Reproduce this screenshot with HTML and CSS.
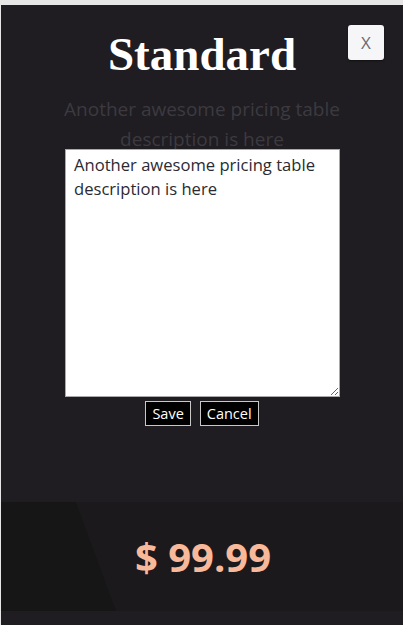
FILE: index.html
```html
<!DOCTYPE html>
<html>
<head>
<meta charset="utf-8">
<link rel="stylesheet" href="styles.css">
</head>
<body>
<div class="card">
  <div class="head">
    <h1 class="title">Standard</h1>
    <button class="close">X</button>
  </div>
  <p class="desc">Another awesome pricing table description is here</p>
  <div class="editor">
    <textarea class="area">Another awesome pricing table description is here</textarea>
    <div class="actions">
      <button class="btn">Save</button>
      <button class="btn">Cancel</button>
    </div>
  </div>
  <div class="price-band">
    <div class="slant"></div>
    <div class="price">$ 99.99</div>
  </div>
  <div class="foot"></div>
</div>
</body>
</html>
```
FILE: styles.css
```css
html, body {
  margin: 0;
  padding: 0;
  background: #e6e6e6;
  height: 100%;
  overflow: hidden;
}
.card {
  margin: 5px 0 0 1px;
  background: #1f1d21;
  height: 620px;
  display: flex;
  flex-direction: column;
  font-family: "Open Sans", "Noto Sans", sans-serif;
}
.head {
  position: relative;
  height: 85px;
  display: flex;
  justify-content: center;
}
.title {
  margin: 21px 0 0 0;
  font-family: "Liberation Serif", serif;
  font-weight: bold;
  font-size: 47px;
  line-height: 56px;
  color: #ffffff;
}
.close {
  position: absolute;
  top: 20px;
  right: 19px;
  width: 36px;
  height: 35px;
  border: none;
  border-radius: 3px;
  background: #f6f6f8;
  color: #6a6a72;
  font-family: "Open Sans", sans-serif;
  font-size: 17px;
  padding: 0;
  box-shadow: 0 1px 2px rgba(0,0,0,0.5);
}
.desc {
  margin: 4px 60px 0 60px;
  text-align: center;
  color: #3c3a40;
  font-size: 19px;
  line-height: 30px;
  height: 55px;
  overflow: visible;
}
.editor {
  display: flex;
  flex-direction: column;
  align-items: center;
  position: relative;
  z-index: 1;
}
.area {
  display: block;
  width: 275px;
  height: 248px;
  box-sizing: border-box;
  margin: 0 0 0 1px;
  padding: 3px 8px;
  border: 1px solid #a9a9a9;
  background: #ffffff;
  color: #2b2a33;
  font-family: "Open Sans", "Noto Sans", sans-serif;
  font-size: 16.6px;
  line-height: 24px;
  resize: both;
}
.actions {
  display: flex;
  gap: 9px;
  margin-top: 4px;
}
.btn {
  background: #000000;
  color: #ffffff;
  border: 1px solid #c8c8c8;
  font-family: "Open Sans", sans-serif;
  font-size: 14.5px;
  padding: 1px 6px;
  height: 25px;
  line-height: 20px;
}
.price-band {
  margin-top: 76px;
  height: 109px;
  background: #1b191c;
  position: relative;
  display: flex;
  align-items: center;
  justify-content: center;
  overflow: hidden;
}
.slant {
  position: absolute;
  left: 0;
  top: 0;
  width: 115px;
  height: 100%;
  background: #161617;
  clip-path: polygon(0 0, 65% 0, 100% 100%, 0 100%);
}
.price {
  position: relative;
  color: #f8b99a;
  font-weight: bold;
  font-size: 40px;
  font-family: "Open Sans", sans-serif;
  margin-left: 2px;
}
.foot {
  flex: 1;
}
```
